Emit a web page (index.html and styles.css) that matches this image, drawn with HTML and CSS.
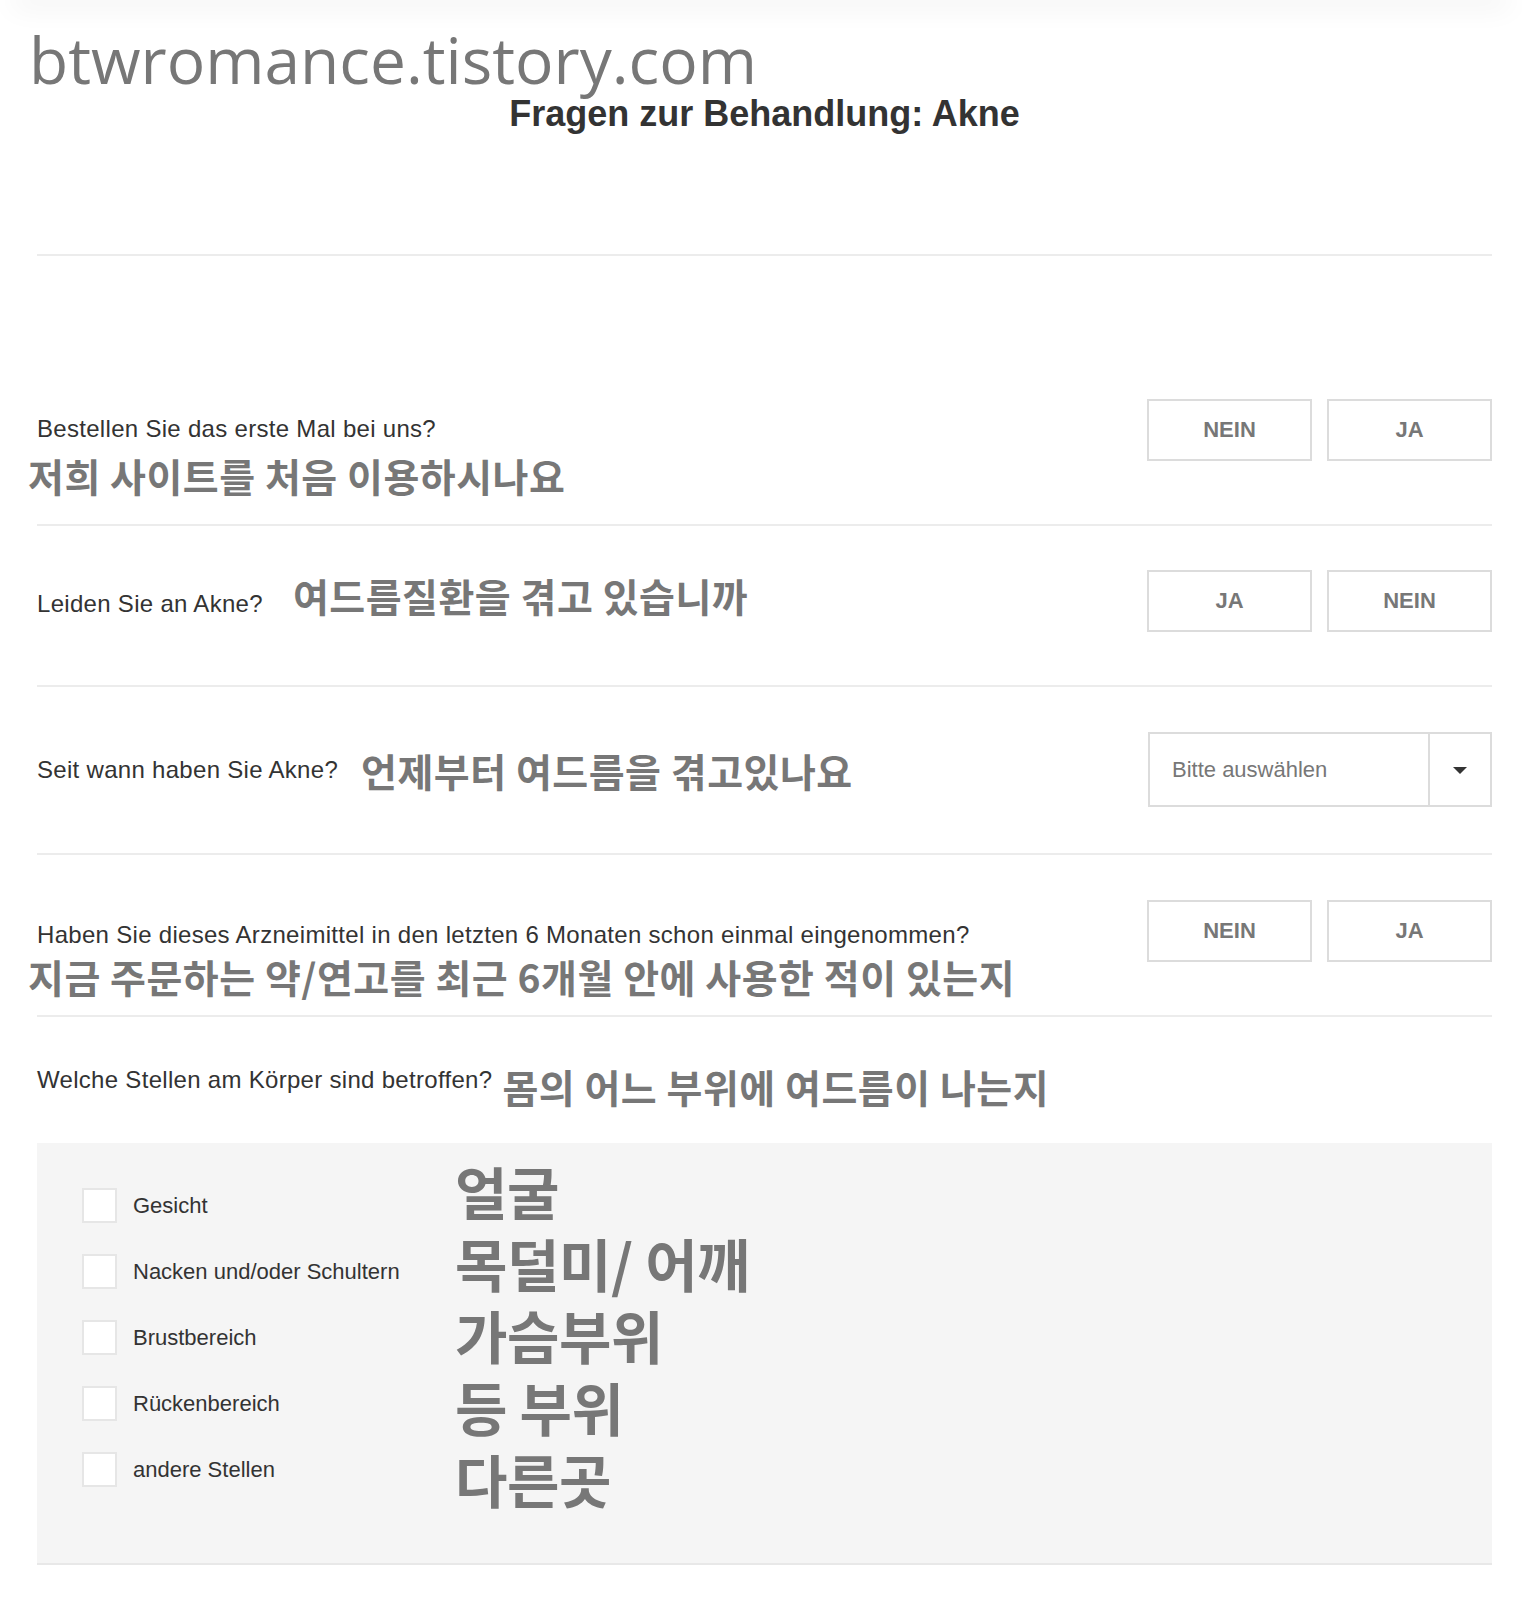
FILE: index.html
```html
<!DOCTYPE HTML>
<html lang="de">

<head>
    <meta http-equiv="Content-Type" content="text/html; charset=utf-8" />
    <link rel="stylesheet" href="styles.css">
    <title>Fragen zur Behandlung: Akne</title>
</head>

<body>
    <div class="topbar"></div>

    <div class="page">
        <div class="site-name">btwromance.tistory.com</div>
        <h1 class="title">Fragen zur Behandlung: Akne</h1>
        <div class="intro"></div>

        <!-- Frage 1 -->
        <div class="q q-first">
            <div class="q-text">
                <p class="de">Bestellen Sie das erste Mal bei uns?</p>
                <p class="ko">저희 사이트를 처음 이용하시나요</p>
            </div>
            <div class="choices">
                <button class="choice" type="button">NEIN</button>
                <button class="choice" type="button">JA</button>
            </div>
        </div>

        <!-- Frage 2 -->
        <div class="q q-acne">
            <div class="q-line">
                <span class="de">Leiden Sie an Akne?</span>
                <span class="ko ko-inline">여드름질환을 겪고 있습니까</span>
            </div>
            <div class="choices">
                <button class="choice" type="button">JA</button>
                <button class="choice" type="button">NEIN</button>
            </div>
        </div>

        <!-- Frage 3 -->
        <div class="q q-since">
            <div class="q-line q-line-tall">
                <span class="de">Seit wann haben Sie Akne?</span>
                <span class="ko ko-inline">언제부터 여드름을 겪고있나요</span>
            </div>
            <div class="select">
                <span class="select-value">Bitte auswählen</span>
                <span class="select-arrow"></span>
            </div>
        </div>

        <!-- Frage 4 -->
        <div class="q q-med">
            <div class="q-text">
                <p class="de">Haben Sie dieses Arzneimittel in den letzten 6 Monaten schon einmal eingenommen?</p>
                <p class="ko">지금 주문하는 약/연고를 최근 6개월 안에 사용한 적이 있는지</p>
            </div>
            <div class="choices">
                <button class="choice" type="button">NEIN</button>
                <button class="choice" type="button">JA</button>
            </div>
        </div>

        <!-- Frage 5 -->
        <div class="q q-body">
            <div class="q-line">
                <span class="de">Welche Stellen am Körper sind betroffen?</span>
                <span class="ko ko-inline">몸의 어느 부위에 여드름이 나는지</span>
            </div>
        </div>

        <div class="areas">
            <ul class="checks">
                <li><span class="box"></span>Gesicht</li>
                <li><span class="box"></span>Nacken und/oder Schultern</li>
                <li><span class="box"></span>Brustbereich</li>
                <li><span class="box"></span>Rückenbereich</li>
                <li><span class="box"></span>andere Stellen</li>
            </ul>
            <ul class="areas-ko">
                <li>얼굴</li>
                <li>목덜미/ 어깨</li>
                <li>가슴부위</li>
                <li>등 부위</li>
                <li>다른곳</li>
            </ul>
        </div>
    </div>
</body>
</html>
```

FILE: styles.css
```css
html {
    margin: 0;
    padding: 0;
}

body {
    margin: 0;
    background: #fff;
    font-family: "Liberation Sans", Arial, sans-serif;
    color: #333;
}

.topbar {
    height: 0;
    margin: 0 20px;
    border-radius: 20px;
    box-shadow: 0 0 28px 8px rgba(0, 0, 0, .06);
}

.page {
    padding: 0 30px 0 37px;
}

.site-name {
    margin-left: -8px;
    padding-top: 28px;
    font-family: "Open Sans", sans-serif;
    font-size: 64px;
    line-height: 63px;
    color: #777;
}

.title {
    margin: 3px 0 0;
    text-align: center;
    font-size: 36px;
    line-height: 40px;
    font-weight: bold;
    color: #333;
}

.intro {
    height: 120px;
    border-bottom: 2px solid #ececec;
}

/* Fragen */

.q {
    display: flex;
    justify-content: space-between;
    align-items: flex-start;
    border-bottom: 2px solid #ececec;
}

.q p {
    margin: 0;
}

.de {
    font-size: 24px;
    line-height: 30px;
    letter-spacing: .3px;
    color: #333;
}

.ko {
    font-family: "Noto Sans CJK KR", sans-serif;
    font-weight: 700;
    font-size: 39px;
    line-height: 50px;
    letter-spacing: .5px;
    color: #777;
}

.q-text .de {
    margin-top: 15px;
}

.q-text .ko {
    margin: 6px 0 0 -9px;
}

.ko-inline {
    margin-left: 30px;
}

.q-line {
    display: flex;
    align-items: baseline;
    height: 62px;
    line-height: 62px;
}

.q-line-tall {
    align-items: center;
    height: 75px;
    line-height: 75px;
}

.q-line-tall .de,
.q-line-tall .ko {
    line-height: 50px;
}

.q-first {
    padding: 143px 0 24px;
}

.q-acne {
    padding: 44px 0 53px;
}

.q-since {
    padding: 45px 0 46px;
}

.q-since .ko-inline {
    margin-left: 23px;
}

.q-med {
    padding: 45px 0 14px;
}

.q-med .q-text .de {
    margin-top: 20px;
}

.q-med .q-text .ko {
    margin-top: 1px;
}

.q-body {
    padding: 34px 0 30px;
    border-bottom: none;
}

.q-body .q-line {
    align-items: center;
}

.q-body .de,
.q-body .ko {
    line-height: 50px;
}

.q-body .de {
    margin-bottom: 4px;
}

.q-body .ko-inline {
    margin: 8px 0 0 10px;
}

.choices {
    display: flex;
    gap: 15px;
}

.choice {
    width: 165px;
    height: 62px;
    padding: 0;
    background: #fff;
    border: 2px solid #dcdcdc;
    font-family: "Liberation Sans", Arial, sans-serif;
    font-size: 22px;
    font-weight: bold;
    color: #777;
}

.select {
    display: flex;
    width: 344px;
    height: 75px;
    box-sizing: border-box;
    border: 2px solid #dcdcdc;
}

.select-value {
    flex: 1;
    padding-left: 22px;
    font-size: 22px;
    line-height: 71px;
    color: #777;
}

.select-arrow {
    position: relative;
    width: 60px;
    border-left: 2px solid #dcdcdc;
}

.select-arrow:after {
    content: "";
    position: absolute;
    left: 23px;
    top: 33px;
    border-left: 7px solid transparent;
    border-right: 7px solid transparent;
    border-top: 7px solid #333;
}

/* Koerperstellen */

.areas {
    display: flex;
    height: 420px;
    background: #f5f5f5;
    border-bottom: 2px solid #e8e8e8;
}

.areas ul {
    margin: 0;
    padding: 0;
    list-style: none;
}

.checks {
    width: 373px;
    padding: 45px 0 0 45px !important;
}

.checks li {
    display: flex;
    align-items: center;
    gap: 16px;
    height: 35px;
    margin-bottom: 31px;
    font-size: 22px;
    color: #333;
}

.box {
    width: 35px;
    height: 35px;
    box-sizing: border-box;
    background: #fff;
    border: 2px solid #e6e6e6;
}

.areas-ko {
    padding-top: 11px !important;
    font-family: "Noto Sans CJK KR", sans-serif;
    font-weight: 700;
    font-size: 57px;
    line-height: 72px;
    letter-spacing: -.4px;
    color: #777;
}
```
